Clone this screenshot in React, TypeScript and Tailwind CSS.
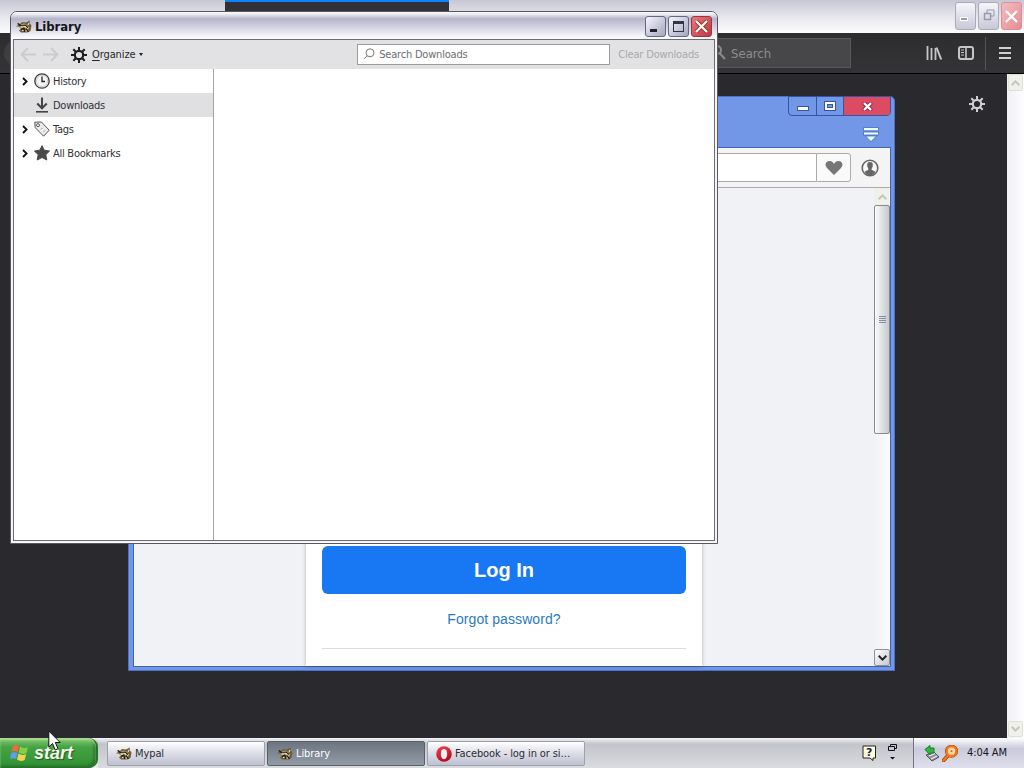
import type { ReactNode } from "react";

const tasks = [
  { label: "Mypal", icon: "mypal", active: false },
  { label: "Library", icon: "mypal", active: true },
  { label: "Facebook - log in or si…", icon: "opera", active: false },
];

const folders = [
  { label: "History", expandable: true, selected: false, icon: <ClockIcon /> },
  { label: "Downloads", expandable: false, selected: true, icon: <DownloadIcon /> },
  { label: "Tags", expandable: true, selected: false, icon: <TagIcon /> },
  { label: "All Bookmarks", expandable: true, selected: false, icon: <StarIcon /> },
];

function ClockIcon() {
  return (
    <svg width="16" height="16" viewBox="0 0 16 16" fill="none">
      <circle cx="8" cy="8" r="7.2" fill="#f4f4f4" stroke="#3c3c3c" strokeWidth="1.3" />
      <circle cx="8" cy="8" r="5.6" stroke="#c4c4c4" strokeWidth="0.8" />
      <path d="M8 3.5V8.5H11" stroke="#222" strokeWidth="1.3" />
    </svg>
  );
}

function DownloadIcon() {
  return (
    <svg width="16" height="16" viewBox="0 0 16 16" fill="none" stroke="#444" strokeWidth="2">
      <path d="M8 0.5V11M3.2 6.5L8 11.3L12.8 6.5" />
      <path d="M2 14.8H14" strokeWidth="1.6" />
    </svg>
  );
}

function TagIcon() {
  return (
    <svg width="16" height="16" viewBox="0 0 16 16" fill="#ececec" stroke="#555" strokeWidth="1">
      <path d="M0.8 1.2L7.4 1L15.2 9.2L9.6 15.2L1.2 6.6Z" strokeLinejoin="round" />
      <circle cx="4" cy="4.2" r="1.5" fill="#fff" />
      <path d="M7 8.5L8.7 6.8M9.5 11L11.2 9.3" stroke="#9a9a9a" />
    </svg>
  );
}

function StarIcon() {
  return (
    <svg width="16" height="16" viewBox="0 0 16 16" fill="#4a4a4a" stroke="#4a4a4a" strokeWidth="1" strokeLinejoin="round">
      <path d="M8 0.7L10.3 5.2L15.5 6L11.8 9.7L12.8 15L8 12.5L3.2 15L4.2 9.7L0.5 6L5.7 5.2Z" />
    </svg>
  );
}

function GearIcon({ color }: { color: string }) {
  return (
    <svg width="16" height="16" viewBox="0 0 16 16" fill="none" stroke={color}>
      <circle cx="8" cy="8" r="4.2" strokeWidth="2.2" />
      <path
        d="M8 0V3.5M8 12.5V16M0 8H3.5M12.5 8H16M2.3 2.3L4.8 4.8M11.2 11.2L13.7 13.7M13.7 2.3L11.2 4.8M4.8 11.2L2.3 13.7"
        strokeWidth="2"
      />
    </svg>
  );
}

function MypalIcon() {
  return (
    <svg width="16" height="14" viewBox="0 0 16 14">
      <path d="M1 3L4 4L6 2L10 2.5L14 0.5L13.5 3L15.5 5.5L14.5 11L11 12.5L5 12.5L3 10.5L5 8.5L2.5 6.5L0 6.5L2 5Z" fill="#6d5d3c" />
      <path d="M5 4.5L8 3.5L11 5L13 7.5L12 10L9 8L6 8.5L3.5 7Z" fill="#d0c292" />
      <path d="M4 5.5L9 5L12 7.5M5 9.5L8 8L8.5 12M10 8.5L12.5 12M2 3.5L5 6" stroke="#211b10" strokeWidth="1.2" fill="none" />
      <path d="M6 10.5H7.5M9.5 11H11M13 3L12 5M8 6.8H10" stroke="#efe3bd" strokeWidth="1.1" />
    </svg>
  );
}

function OperaIcon() {
  return (
    <svg width="16" height="16" viewBox="0 0 16 16">
      <defs>
        <linearGradient id="opera" x1="0" y1="0" x2="0.4" y2="1">
          <stop offset="0" stopColor="#ee4450" />
          <stop offset="1" stopColor="#ba0d1d" />
        </linearGradient>
      </defs>
      <ellipse cx="8" cy="8" rx="7.8" ry="7.8" fill="url(#opera)" />
      <ellipse cx="8" cy="8" rx="3.2" ry="5.3" fill="#f4edf3" />
    </svg>
  );
}

function UpDown({ down = false, color = "#c5c5b8" }: { down?: boolean; color?: string }) {
  return (
    <svg width="9" height="6" viewBox="0 0 9 6" fill="none" stroke={color} strokeWidth="2">
      <path d={down ? "M0.7 0.8L4.5 4.6L8.3 0.8" : "M0.7 5.2L4.5 1.4L8.3 5.2"} />
    </svg>
  );
}

function CaptionButton({ className, children }: { className: string; children: ReactNode }) {
  return (
    <button className={`flex items-center justify-center rounded-[3px] border ${className}`}>{children}</button>
  );
}

function MypalWindow() {
  return (
    <div className="flex h-[738px] w-full flex-col bg-[#2a2a2e]">
      {/* Tabs and caption */}
      <div className="flex h-[33px] shrink-0 bg-linear-to-b from-[#c7c7d5] via-[#e6e6ed] to-[#fcfcfd]">
        <div className="h-full w-[225px]" />
        <div className="h-full w-[224px] border-t-2 border-[#0a84ff] bg-[#323137]" />
        <div className="flex flex-1 justify-end gap-[2px] pr-[2px] pt-[2px]">
          <CaptionButton className="h-[28px] w-[21px] border-[#aaaabb] bg-linear-to-b from-[#f6f6fa] to-[#c9c9d7]">
            <span className="mr-1 mt-1.5 h-[4px] w-[8px] border border-white bg-[#9999b0]" />
          </CaptionButton>
          <CaptionButton className="h-[28px] w-[21px] border-[#aaaabb] bg-linear-to-b from-[#f6f6fa] to-[#c9c9d7]">
            <svg className="-mt-0.5" width="12" height="12" viewBox="0 0 12 12" fill="none" stroke="#9898ae">
              <path d="M4 4V1H11V7H8" />
              <path d="M1.5 4.5H7.5V10.5H1.5Z" strokeWidth="1.5" />
            </svg>
          </CaptionButton>
          <CaptionButton className="h-[28px] w-[21px] border-[#dc8d97] bg-linear-to-br from-[#f2bdc0] to-[#e68b95]">
            <svg width="13" height="13" viewBox="0 0 13 13" stroke="#fff" strokeWidth="2.2">
              <path d="M1 1L12 12M12 1L1 12" />
            </svg>
          </CaptionButton>
        </div>
      </div>

      {/* Navigation bar */}
      <div className="flex h-[41px] shrink-0 items-center border-b border-black bg-linear-to-b from-[#2d2d2f] to-[#343436]">
        <div className="ml-[4px] h-[26px] w-[26px] rounded-full bg-[#3e3e41]" />
        <div className="ml-auto flex h-[30px] w-[151px] items-center border border-[#59595b] bg-[#474749] pl-[13px]">
          <svg width="12" height="16" viewBox="0 0 12 16" fill="none" stroke="#8b8b8d" strokeWidth="2">
            <circle cx="3" cy="5" r="4" />
            <path d="M5.5 8L11 14" />
          </svg>
          <span className="ml-[5px] mt-px font-['DejaVu_Sans_Condensed','DejaVu_Sans',sans-serif] text-[13px] text-[#8d8d90]">Search</span>
        </div>
        <svg className="ml-[75px]" width="16" height="16" viewBox="0 0 16 16" stroke="#c6c6c8" strokeWidth="2">
          <path d="M1.5 1V15M5.5 3V15M9.5 3V15" strokeWidth="1.8" />
          <path d="M10.5 2.5L15.2 14.5" />
        </svg>
        <svg className="ml-4" width="16" height="16" viewBox="0 0 16 16" fill="none" stroke="#c6c6c8" strokeWidth="2">
          <rect x="1" y="2" width="14" height="12" rx="2" />
          <path d="M8 2V14" strokeWidth="1.6" />
          <path d="M3 5H6M3 7.5H6M3 10H6" strokeWidth="1" />
        </svg>
        <div className="ml-[11px] h-[33px] w-px bg-[#555557]" />
        <svg className="ml-[12px] mr-[12px]" width="14" height="14" viewBox="0 0 14 14" stroke="#d0d0d2" strokeWidth="2">
          <path d="M1 2H13M1 7H13M1 12H13" />
        </svg>
      </div>

      {/* Page */}
      <div className="flex flex-1 justify-end">
        <div className="mr-[22px] mt-[22px]">
          <GearIcon color="#d0d0d2" />
        </div>
        <div className="flex w-[17px] flex-col items-center justify-between bg-linear-to-r from-[#f1f1f6] to-[#fdfdff]">
          <div className="flex h-[17px] w-[15px] items-center justify-center rounded-[2px] border border-[#dedfd7] bg-[#f1f1ec]">
            <UpDown />
          </div>
          <div className="mb-px flex h-[16px] w-[15px] items-center justify-center rounded-[2px] border border-[#dedfd7] bg-[#f1f1ec]">
            <UpDown down />
          </div>
        </div>
      </div>
    </div>
  );
}

function OperaWindow() {
  return (
    <div className="absolute left-[128px] top-[96px] flex h-[575px] w-[767px] flex-col rounded-tr-[5px] border border-[#4a72cc] bg-[#7297e7] pb-[3px] pl-[4px] pr-[3px]">
      <div className="flex h-[50px] shrink-0 flex-col items-end">
        <div className="-mt-px flex h-[20px] overflow-hidden rounded-b-[4px] border border-[#3456a2] text-white">
          <div className="flex w-[28px] items-center justify-center border-r border-[#3456a2]">
            <span className="mt-1 h-[5px] w-[12px] border border-[#3456a2] bg-white" />
          </div>
          <div className="flex w-[27px] items-center justify-center border-r border-[#3456a2]">
            <svg width="12" height="10" viewBox="0 0 12 10" fill="none">
              <rect x="0.5" y="0.5" width="11" height="9" fill="#fff" stroke="#3456a2" />
              <rect x="3.5" y="3.5" width="5" height="3" fill="#7297e7" stroke="#3456a2" />
            </svg>
          </div>
          <div className="flex w-[46px] items-center justify-center bg-[#dc4b62]">
            <svg width="11" height="9" viewBox="0 0 11 9">
              <path d="M1.5 0.5L9.5 8.5M9.5 0.5L1.5 8.5" stroke="#8a2944" strokeWidth="4" />
              <path d="M2 1L9 8M9 1L2 8" stroke="#fff" strokeWidth="2.4" />
            </svg>
          </div>
        </div>
        <svg className="mr-[12px] mt-[11px]" width="16" height="15" viewBox="0 0 16 15" fill="#eaffff" stroke="#4268bc" strokeWidth="0.8">
          <path d="M0.5 0.5H15.5V3.8H0.5ZM0.5 5H15.5V8H0.5ZM2.5 9H13.5L8 14.6Z" />
        </svg>
      </div>

      <div className="flex flex-1 flex-col border border-[#3d64b6] bg-[#f0f2f5]">
        {/* Address row */}
        <div className="flex h-[40px] shrink-0 items-center border-b border-[#aaa] bg-[#f4f4f4]">
          <div className="ml-[10px] h-[29px] flex-1 border border-r-0 border-[#aaa] bg-white" />
          <div className="flex h-[29px] w-[35px] items-center justify-center rounded-r-[3px] border border-[#aaa] bg-[#fafafa]">
            <svg width="18" height="16" viewBox="0 0 18 16" fill="#777">
              <path d="M9 15L2 8C-1 4.5 1 1 4.5 1C7 1 8.5 2.5 9 4C9.5 2.5 11 1 13.5 1C17 1 19 4.5 16 8Z" />
            </svg>
          </div>
          <svg className="ml-[10px] mr-[11px]" width="18" height="18" viewBox="0 0 18 18">
            <circle cx="9" cy="9" r="7.8" fill="#f7f7f7" stroke="#666" strokeWidth="1.6" />
            <path d="M9 3C11.5 3 12.3 5 11.6 7.5C11.2 9 10.5 9.5 10.5 10.8L14.5 12.7C13 15 11.5 16.3 9 16.3S5 15 3.5 12.7L7.5 10.8C7.5 9.5 6.8 9 6.4 7.5C5.7 5 6.5 3 9 3Z" fill="#666" />
          </svg>
        </div>

        {/* Login page */}
        <div className="flex flex-1">
          <div className="ml-[172px] flex w-[396px] flex-col items-center bg-white px-[16px] shadow-[0_0_4px_rgba(0,0,0,0.25)]">
            <button className="mt-[358px] h-[48px] w-full shrink-0 rounded-[6px] bg-[#1877f2] font-['Liberation_Sans',Arial,sans-serif] text-[20px] font-bold text-white">
              Log In
            </button>
            <a className="mt-[15px] font-['Liberation_Sans',Arial,sans-serif] text-[14px] leading-5 tracking-[0.08px] text-[#287bc0]">
              Forgot password?
            </a>
            <div className="mt-[19px] h-px w-full bg-[#dadde1]" />
          </div>
          <div className="ml-auto flex w-[16px] flex-col items-center bg-linear-to-r from-[#f0f2f5] to-[#fcfcff]">
            <div className="flex h-[17px] w-[14px] items-center justify-center border border-[#eeeee7] bg-[#f1f1eb]">
              <UpDown />
            </div>
            <div className="flex h-[229px] w-full flex-col items-center justify-center gap-px rounded-[2px] border border-[#858b91] bg-linear-to-r from-[#fcfcff] via-[#e0e1e5] to-[#c2c9cc]">
              <span className="h-px w-[7px] bg-[#898da1]" />
              <span className="h-px w-[7px] bg-[#898da1]" />
              <span className="h-px w-[7px] bg-[#898da1]" />
              <span className="h-px w-[7px] bg-[#898da1]" />
            </div>
            <div className="mt-auto flex h-[17px] w-[16px] items-center justify-center rounded-[2px] border border-[#8b9298] bg-linear-to-br from-white to-[#c4c8ce]">
              <UpDown down color="#222" />
            </div>
          </div>
        </div>
      </div>
    </div>
  );
}

function LibraryWindow() {
  return (
    <div className="absolute left-[10px] top-[11px] flex h-[533px] w-[708px] flex-col rounded-t-[7px] border border-[#58585f] bg-[#f5f5f7] px-[2px] pb-[2px] font-['DejaVu_Sans_Condensed','DejaVu_Sans',sans-serif]">
      <div className="-mx-[2px] flex h-[27px] shrink-0 items-center rounded-t-[6px] bg-linear-to-b from-[#f5f5f8] from-5% via-[#b5b5cb] via-25% to-[#fafafd] to-95% pl-[5px] pr-[5px] pt-[2px]">
        <MypalIcon />
        <span className="ml-[3px] mt-px text-[13px] font-bold tracking-[-0.1px] text-[#15151a]">Library</span>
        <div className="ml-auto flex gap-[2px]">
          <CaptionButton className="h-[21px] w-[21px] border-[#666681] bg-linear-to-br from-[#f7f7ff] to-[#a5a5bf]">
            <span className="mr-1 mt-2 h-[3px] w-[7px] bg-[#22222e]" />
          </CaptionButton>
          <CaptionButton className="h-[21px] w-[21px] border-[#666681] bg-linear-to-br from-[#f7f7ff] to-[#a5a5bf]">
            <span className="h-[11px] w-[11px] border border-t-[3px] border-[#343445]" />
          </CaptionButton>
          <CaptionButton className="h-[21px] w-[21px] border-[#933844] bg-linear-to-br from-[#e97779] to-[#bf3545]">
            <svg width="13" height="13" viewBox="0 0 13 13">
              <path d="M1 1L12 12M12 1L1 12" stroke="#8e3136" strokeWidth="4" />
              <path d="M1 1L12 12M12 1L1 12" stroke="#fffbe8" strokeWidth="2.3" />
            </svg>
          </CaptionButton>
        </div>
      </div>

      <div className="flex flex-1 flex-col border border-[#6c6c72] bg-white">
        {/* Toolbar */}
        <div className="flex h-[29px] shrink-0 items-center bg-[#e2e2e4] text-[11px] tracking-[-0.2px]">
          <svg className="ml-[6px]" width="40" height="15" viewBox="0 0 40 15" fill="none" stroke="#cbcbce" strokeWidth="1.8">
            <path d="M16 7.5H2M8 1L1.5 7.5L8 14M23 7.5H37M31 1L37.5 7.5L31 14" />
          </svg>
          <div className="ml-[11px]">
            <GearIcon color="#1e1e20" />
          </div>
          <span className="ml-[5px] mt-[2px] tracking-[-0.1px] text-[#28282b]">
            <span className="underline underline-offset-2">O</span>rganize
          </span>
          <span className="ml-[3px] border-x-[2.5px] border-t-[3px] border-x-transparent border-t-[#222]" />
          <div className="ml-auto flex h-[21px] w-[253px] items-center border border-[#9b9ba0] bg-white pl-[5px] text-[#6d6d70]">
            <svg width="13" height="13" viewBox="0 0 13 13" fill="none" stroke="#777">
              <circle cx="7" cy="4.8" r="4" />
              <path d="M4.2 7.7L0.8 11" />
            </svg>
            <span className="ml-[3px] mt-[2px]">Search Downloads</span>
          </div>
          <span className="ml-[8px] mr-[15px] mt-[2px] tracking-[-0.17px] text-[#a8a8ab]">Clear Downloads</span>
        </div>

        <div className="flex flex-1">
          {/* Folder tree */}
          <div className="w-[200px] border-r border-[#a5a5a8]">
            {folders.map((folder) => (
              <div
                key={folder.label}
                className={`flex h-[24px] items-center pl-[8px] text-[11px] tracking-[-0.26px] text-[#303033] ${folder.selected ? "bg-[#e0e0e3]" : ""}`}
              >
                <svg className="mt-px" width="6" height="9" viewBox="0 0 6 9" fill="none" stroke="#111" strokeWidth="1.8">
                  {folder.expandable && <path d="M1 1L4.6 4.5L1 8" />}
                </svg>
                <span className="ml-[6px]">{folder.icon}</span>
                <span className="ml-[3px] mt-[2px]">{folder.label}</span>
              </div>
            ))}
          </div>
          <div className="flex-1" />
        </div>
      </div>
    </div>
  );
}

function Taskbar() {
  return (
    <div className="flex h-[30px] bg-linear-to-b from-[#fafafa] via-[#b6b9c4] via-15% to-[#eeeef2] font-['DejaVu_Sans_Condensed','DejaVu_Sans',sans-serif]">
      <button className="flex h-full w-[98px] items-center rounded-r-[9px] border-r-2 border-[#26732b] bg-linear-to-b from-[#87cb75] via-[#45a344] via-30% to-[#2f8f32] pl-[10px] shadow-[inset_0_2px_2px_#a8dd91,inset_-2px_-2px_3px_#246b29]">
        <svg width="19" height="18" viewBox="0 0 19 18">
          <path d="M3 2Q6 0 9 2L7.5 8Q4.5 6 1.5 8Z" fill="#ed6c3d" />
          <path d="M10 2.5Q14 5 18 3L16.5 9Q12.5 11 8.7 8.5Z" fill="#86ce45" />
          <path d="M1.2 9Q4.5 7.5 7.3 9L6 15Q3 13.5 0 15Z" fill="#609cf3" />
          <path d="M8.5 9.5Q12.5 12 16.2 10L14.7 16Q10.5 18 7 15.5Z" fill="#f2d350" />
        </svg>
        <span className="ml-[5px] font-['Liberation_Sans',Arial,sans-serif] text-[18px] font-bold italic leading-none text-[#f5f7e8] [text-shadow:1px_1px_1px_#28582a]">
          start
        </span>
      </button>

      <div className="flex flex-1 items-center bg-linear-to-b from-[#f5f5f7] via-[#c2c4cb] via-20% to-[#dadce0] pl-[9px]">
        <div className="mt-px flex gap-[2px]">
          {tasks.map((task) => (
            <button
              key={task.label}
              className={`flex h-[25px] w-[158px] items-center rounded-[2px] border text-[11px] ${
                task.active
                  ? "border-[#5a606b] bg-linear-to-b from-[#6c7580] to-[#929ba6] pl-[9px] pt-px text-white"
                  : "border-[#9da0ad] bg-linear-to-b from-[#fff] via-[#dcdde6] to-[#bfc0d1] pl-[8px] text-[#2c2c33]"
              }`}
            >
              {task.icon === "mypal" ? <MypalIcon /> : <OperaIcon />}
              <span className="ml-[3px] mt-px whitespace-nowrap tracking-[-0.1px]">{task.label}</span>
            </button>
          ))}
        </div>
        <svg className="ml-auto" width="15" height="16" viewBox="0 0 15 16">
          <path d="M1 1H13.5V13H11V15.5L8 13H1Z" fill="#ffffdc" stroke="#222" />
          <text x="7.2" y="11.3" textAnchor="middle" fill="#18204a" fontFamily="DejaVu Sans" fontSize="11" fontWeight="bold">?</text>
        </svg>
        <svg className="ml-[11px] mr-[16px]" width="9" height="20" viewBox="0 0 9 20" fill="none" stroke="#111">
          <path d="M2.5 3V1.5H8.5V5.5H6M0.5 3.5H6.5V7.5H0.5Z" />
          <path d="M2 14H7L4.5 16.5Z" fill="#111" stroke="none" />
        </svg>
      </div>

      {/* Notification area */}
      <div className="flex w-[111px] items-center border-l border-[#73737f] bg-linear-to-b from-white via-[#c9c9db] via-35% to-[#dfdfec] pl-[10px]">
        <svg width="16" height="17" viewBox="0 0 16 17">
          <path d="M2 10L10 7L15 12L8 16Z" fill="#8c929b" stroke="#555" />
          <path d="M5 11L11 8.5M7 14L13 11" stroke="#eef" strokeWidth="1.2" />
          <path d="M1 4.5L6 0.5V3H10V8H6V10Z" fill="#34b43a" stroke="#267b35" />
        </svg>
        <svg className="ml-[2px]" width="16" height="17" viewBox="0 0 16 17" fill="none">
          <path d="M6.5 10L1.5 15.5" stroke="#9c470c" strokeWidth="4" strokeLinecap="round" />
          <circle cx="9.5" cy="6.2" r="4.8" stroke="#9c470c" strokeWidth="3.4" />
          <path d="M6.5 10L1.5 15.5" stroke="#f57a18" strokeWidth="2.5" strokeLinecap="round" />
          <circle cx="9.5" cy="6.2" r="4.8" fill="#ffd9a9" stroke="#f57a18" strokeWidth="2.3" />
          <circle cx="9.5" cy="6.2" r="1" fill="#d95f0a" />
        </svg>
        <span className="ml-[9px] mt-px whitespace-nowrap text-[11px] tracking-[-0.1px] text-[#16161b]">4:04 AM</span>
      </div>
    </div>
  );
}

export default function App() {
  return (
    <div className="relative h-[768px] w-[1024px] overflow-hidden">
      <MypalWindow />
      <OperaWindow />
      <LibraryWindow />
      <Taskbar />
      <svg className="absolute left-[48px] top-[730px]" width="13" height="21" viewBox="0 0 13 21">
        <path d="M0.8 1V17L4.5 13.5L7.2 20L10 18.7L7.3 12.5H12.2Z" fill="#fff" stroke="#111" />
      </svg>
    </div>
  );
}
